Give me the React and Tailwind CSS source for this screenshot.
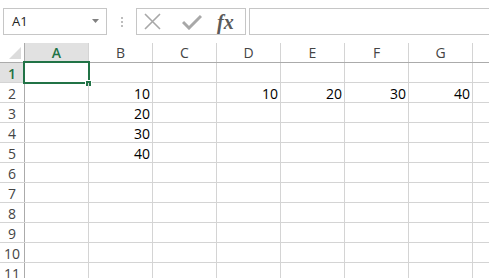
const cols = ["A", "B", "C", "D", "E", "F", "G", ""];

const data = {
  2: { B: "10", D: "10", E: "20", F: "30", G: "40" },
  3: { B: "20" },
  4: { B: "30" },
  5: { B: "40" },
};

const rows = [1, 2, 3, 4, 5, 6, 7, 8, 9, 10, 11];

const Toolbar = () => (
  <div className="flex h-[43px] items-start pl-[3px] pt-[8px]">
    <div className="flex h-[27px] w-[104px] shrink-0 items-center justify-between border border-[#c6c6c6] pl-[8px] pr-[6px] text-[13px] text-[#222]">
      <span>A1</span>
      <svg width="8" height="5" viewBox="0 0 8 5">
        <path d="M0 0 H7 L3.5 4 Z" fill="#808080" />
      </svg>
    </div>
    <div className="flex h-[27px] w-[29px] shrink-0 flex-col items-center justify-center gap-[2px]">
      <span className="h-[2px] w-[2px] bg-[#bdbdbd]" />
      <span className="h-[2px] w-[2px] bg-[#bdbdbd]" />
      <span className="h-[2px] w-[2px] bg-[#bdbdbd]" />
    </div>
    <div className="flex h-[27px] w-[110px] shrink-0 items-center border border-[#c6c6c6] pl-[5px]">
      <svg width="19" height="19" viewBox="0 0 19 19" className="ml-[1px]">
        <path d="M2 2 L17 17 M17 2 L2 17" stroke="#a8a8a8" strokeWidth="1.6" />
      </svg>
      <svg width="20" height="16" viewBox="0 0 20 16" className="ml-[20px]">
        <path d="M1 8 L7 14 L19 2" stroke="#a8a8a8" strokeWidth="3" fill="none" />
      </svg>
      <span className="ml-[15px] font-['Liberation_Serif',serif] text-[20px] font-bold italic leading-none text-[#5a5a5a]">
        fx
      </span>
    </div>
    <div className="ml-[3px] h-[27px] w-[260px] shrink-0 border border-[#c6c6c6]" />
  </div>
);

const HeaderRow = () => (
  <div className="flex h-[20px] border-b border-[#ababab]">
    <div className="relative h-full w-[25px] shrink-0 border-r border-[#ababab]">
      <svg width="12" height="12" viewBox="0 0 12 12" className="absolute bottom-[3px] right-[3px]">
        <path d="M12 0 V12 H0 Z" fill="#dcdcdc" />
      </svg>
    </div>
    {cols.map((c, i) =>
      c === "A" ? (
        <div
          key={i}
          className="flex h-full w-[64px] shrink-0 items-center justify-center border-r border-[#d4d4d4] bg-[#e1e1e1] text-[14px] font-semibold text-[#217346]"
        >
          {c}
        </div>
      ) : (
        <div
          key={i}
          className="flex h-full w-[64px] shrink-0 items-center justify-center border-r border-[#d4d4d4] text-[14px] text-[#444]"
        >
          {c}
        </div>
      )
    )}
  </div>
);

const Row = ({ n }) => (
  <div className="flex h-[20px] border-b border-[#d4d4d4]">
    {n === 1 ? (
      <div className="flex h-full w-[25px] shrink-0 items-end justify-center border-r border-[#ababab] bg-[#e1e1e1] pb-[1px] text-[14px] font-semibold text-[#217346]">
        {n}
      </div>
    ) : (
      <div className="flex h-full w-[25px] shrink-0 items-end justify-center border-r border-[#ababab] pb-[1px] text-[14px] text-[#444]">
        {n}
      </div>
    )}
    {cols.map((c, i) => (
      <div
        key={i}
        className="relative flex h-full w-[64px] shrink-0 items-end justify-end border-r border-[#d4d4d4] pb-[1px] pr-[2px] text-[14px] text-black"
      >
        {(data[n] || {})[c]}
        {n === 1 && c === "A" && (
          <>
            <div className="absolute left-[-2px] top-[-2px] h-[23px] w-[67px] border-2 border-[#217346]" />
            <div className="absolute left-[60px] top-[17px] h-[7px] w-[7px] border border-white bg-[#217346]" />
          </>
        )}
      </div>
    ))}
  </div>
);

export default function App() {
  return (
    <div className="h-[278px] w-[489px] overflow-hidden bg-white font-['Open_Sans',sans-serif] leading-none">
      <Toolbar />
      <HeaderRow />
      {rows.map((n) => (
        <Row key={n} n={n} />
      ))}
    </div>
  );
}
